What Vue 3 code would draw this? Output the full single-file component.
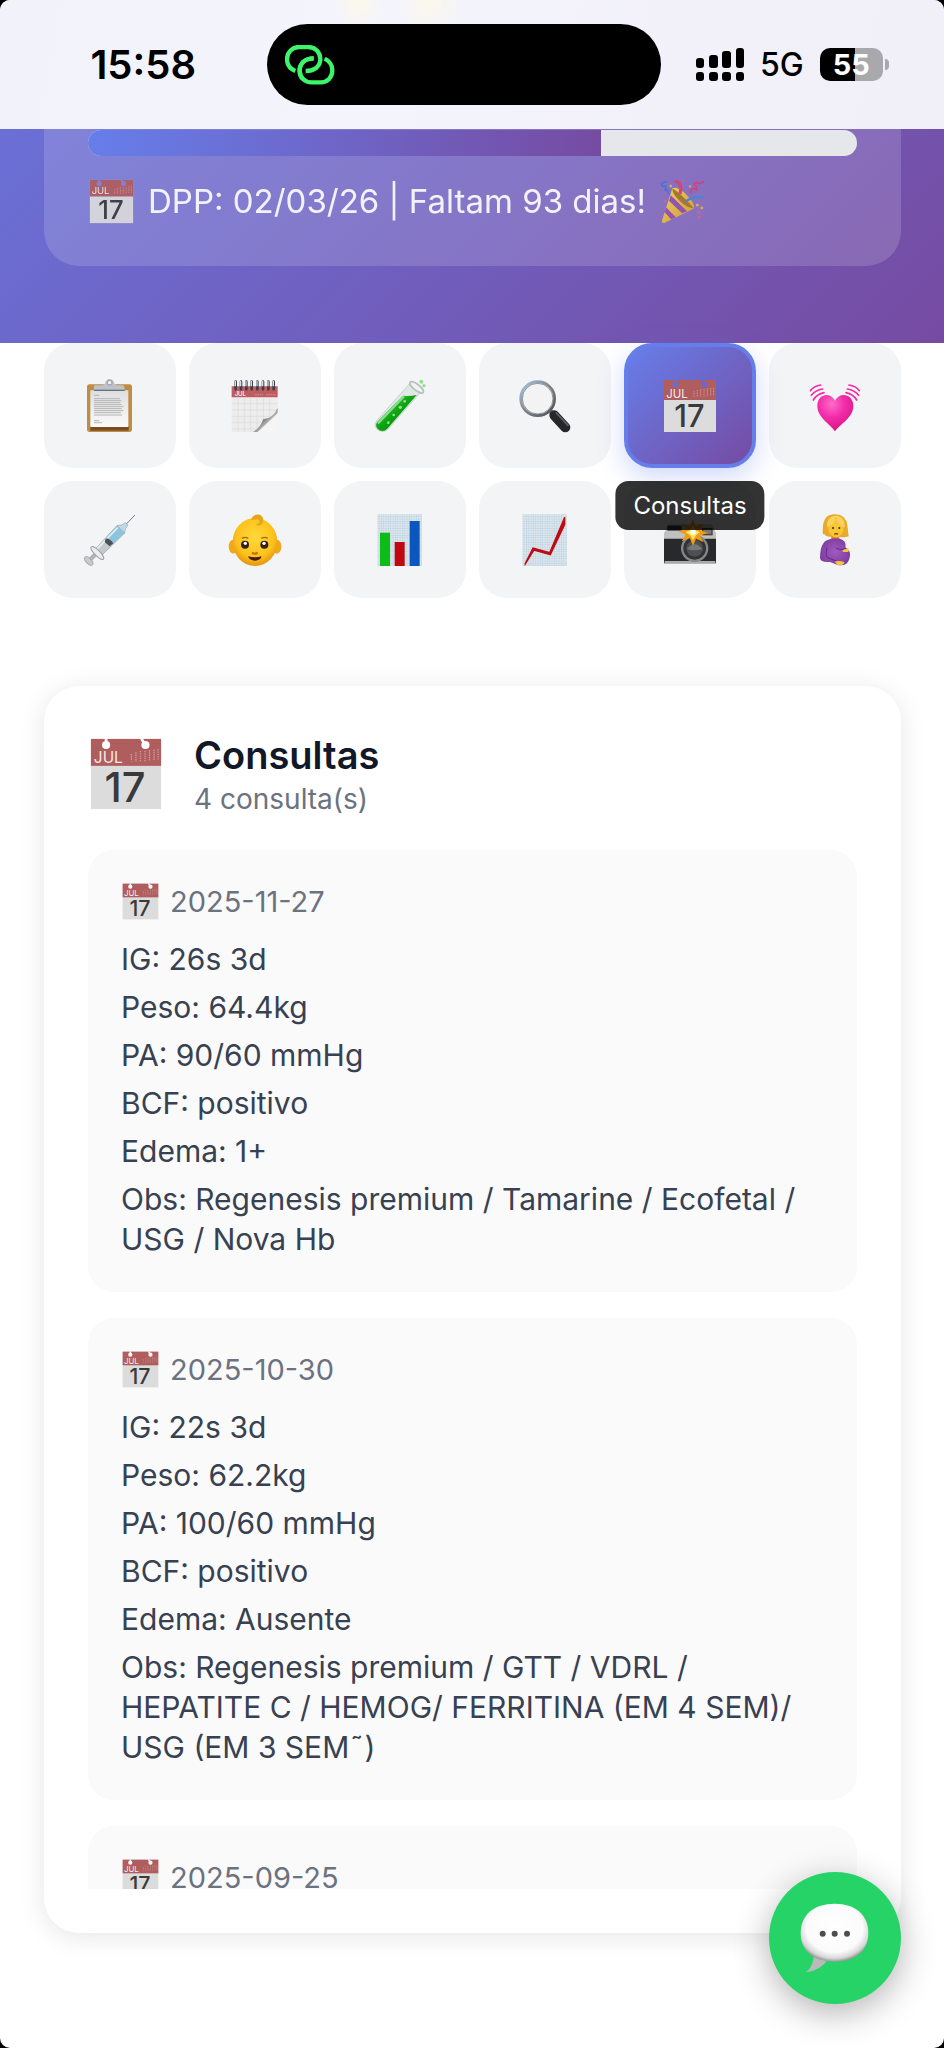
<script setup>
import { h, ref } from 'vue'

const active = ref('Consultas')

// Lettering printed on some of the icons
const lettering = {
  calendar: [
    { value: 'JUL', x: 7, y: 53, size: 34, weight: 400, fill: '#f6eaea', anchor: 'start' },
    { value: '17', x: 76, y: 141, size: 92, weight: 500, fill: '#3a3a3a', anchor: 'middle' },
  ],
  spiral: [{ value: 'JUL', x: 17, y: 49, size: 18, weight: 500, fill: '#fff', anchor: 'start' }],
}

const Emoji = (props) =>
  h('svg', { viewBox: '-6 -6 168 168', 'aria-hidden': 'true' }, [
    h('use', { href: '#' + props.name, x: -6, y: -6, width: 168, height: 168 }),
    ...(lettering[props.name] || []).map((t) =>
      h(
        'text',
        {
          x: t.x,
          y: t.y,
          'font-family': 'Inter, sans-serif',
          'font-size': t.size,
          'font-weight': t.weight,
          'text-anchor': t.anchor,
          fill: t.fill,
        },
        t.value
      )
    ),
  ])
Emoji.props = ['name']

const tabs = [
  { label: 'Resumo', icon: 'clipboard' },
  { label: 'Agenda', icon: 'spiral' },
  { label: 'Exames', icon: 'tube' },
  { label: 'Ultrassons', icon: 'lens' },
  { label: 'Consultas', icon: 'calendar' },
  { label: 'Batimentos', icon: 'heart' },
  { label: 'Vacinas', icon: 'syringe' },
  { label: 'Bebê', icon: 'baby' },
  { label: 'Dados', icon: 'bars' },
  { label: 'Curvas', icon: 'chart' },
  { label: 'Fotos', icon: 'camera' },
  { label: 'Gestante', icon: 'pregnant' },
]

const visits = [
  {
    date: '2025-11-27',
    lines: [
      'IG: 26s 3d',
      'Peso: 64.4kg',
      'PA: 90/60 mmHg',
      'BCF: positivo',
      'Edema: 1+',
      'Obs: Regenesis premium / Tamarine / Ecofetal / USG / Nova Hb',
    ],
  },
  {
    date: '2025-10-30',
    lines: [
      'IG: 22s 3d',
      'Peso: 62.2kg',
      'PA: 100/60 mmHg',
      'BCF: positivo',
      'Edema: Ausente',
      'Obs: Regenesis premium / GTT / VDRL / HEPATITE C / HEMOG/ FERRITINA (EM 4 SEM)/ USG (EM 3 SEM˜)',
    ],
  },
  { date: '2025-09-25', lines: [] },
]
</script>

<template>
  <div class="page">
    <svg class="sprite" width="0" height="0" aria-hidden="true">
      <defs>
        <mask id="holes">
          <rect width="156" height="156" fill="#fff" />
          <circle cx="34" cy="14" r="9" fill="#000" />
          <circle cx="121" cy="14" r="9" fill="#000" />
          <path d="M34 14V0M121 14L112 0" stroke="#000" stroke-width="6" />
        </mask>
        <linearGradient id="paper" x1="0" y1="0" x2="0" y2="1">
          <stop offset="0" stop-color="#dedee0" /><stop offset="1" stop-color="#fbfbfb" />
        </linearGradient>
        <linearGradient id="curl" x1="0" y1="0" x2="1" y2="1">
          <stop offset="0" stop-color="#ddd" /><stop offset=".35" stop-color="#555" /><stop offset=".7" stop-color="#ddd" /><stop offset="1" stop-color="#fff" />
        </linearGradient>
        <linearGradient id="green" x1="0" y1="0" x2="1" y2="1">
          <stop offset="0" stop-color="#55d65a" /><stop offset=".5" stop-color="#0ca30f" /><stop offset="1" stop-color="#087d0d" />
        </linearGradient>
        <linearGradient id="rim" x1="0" y1="0" x2="1" y2="1">
          <stop offset="0" stop-color="#9cc8f0" /><stop offset=".4" stop-color="#8b8f96" /><stop offset="1" stop-color="#4a4c50" />
        </linearGradient>
        <radialGradient id="pink" cx=".4" cy=".25" r=".8">
          <stop offset="0" stop-color="#ff6cc8" /><stop offset=".45" stop-color="#f32dab" /><stop offset="1" stop-color="#d4127f" />
        </radialGradient>
        <radialGradient id="skin" cx=".5" cy=".4" r=".6">
          <stop offset="0" stop-color="#ffd93b" /><stop offset=".7" stop-color="#fcc21b" /><stop offset="1" stop-color="#e39412" />
        </radialGradient>
        <linearGradient id="cone" x1="0" y1="0" x2="1" y2="1">
          <stop offset="0" stop-color="#f8e060" /><stop offset="1" stop-color="#d99a22" />
        </linearGradient>
        <radialGradient id="violet" cx=".5" cy=".5" r=".6">
          <stop offset="0" stop-color="#a05ac0" /><stop offset="1" stop-color="#7c3a9c" />
        </radialGradient>
        <radialGradient id="bubble" cx=".5" cy=".42" r=".58">
          <stop offset="0" stop-color="#fff" /><stop offset=".72" stop-color="#fbfbfb" /><stop offset=".9" stop-color="#d8d8d8" /><stop offset="1" stop-color="#999" />
        </radialGradient>
        <pattern id="gridlines" width="7" height="7" patternUnits="userSpaceOnUse">
          <rect width="7" height="7" fill="#dbe6ee" /><path d="M0 0H7M0 0V7" stroke="#b3c8d8" stroke-width="2" />
        </pattern>
      </defs>

      <symbol id="calendar" viewBox="-6 -6 168 168">
        <g mask="url(#holes)">
          <rect width="156" height="156" fill="#dcdcdc" />
          <rect width="156" height="60" fill="#b05d5e" />
        </g>
        <path d="M90 34V51M100 30V51M110 27V51M120 27V51M130 25V48M140 24V47M149 23V46" stroke="#d09a9a" stroke-width="3" stroke-dasharray="3 2" />
      </symbol>

      <symbol id="clipboard" viewBox="-6 -6 168 168">
        <rect x="9" y="13" width="135" height="143" rx="8" fill="#bf8c43" />
        <rect x="19" y="138" width="115" height="14" fill="#7a4d22" />
        <path d="M19 31H133V141H19Z" fill="url(#paper)" />
        <path d="M31 16H53Q60 16 64 9A13 12 0 0 1 90 9Q94 16 101 16H116Q122 16 122 31H30Q29 18 31 16Z" fill="#bcc3ca" />
        <path d="M30 31H122" stroke="#6c7278" stroke-width="4" />
        <circle cx="77" cy="8" r="7" fill="#f3f4f6" stroke="#9aabb9" stroke-width="4" />
        <path d="M30 46H46M30 56H108M30 62H112M30 68H109M30 74H113M30 80H118M30 86H113M30 92H118M30 98H110M30 105H114M30 122H46M30 128H54" stroke="#b4b4b4" stroke-width="3" />
      </symbol>

      <symbol id="spiral" viewBox="-6 -6 168 168">
        <path d="M8 19H146V98L88 156H8Z" fill="#ededee" />
        <path d="M8 19H146V52H8Z" fill="#bf5c60" />
        <path d="M27 52V156M46 52V156M65 52V156M84 52V156M103 52V140M122 52V120M8 71H146M8 90H146M8 109H130M8 128H110M8 147H94" stroke="#d9d9db" stroke-width="2" />
        <path d="M72 156Q98 138 104 120Q133 118 146 94V156Z" fill="#f5f5f5" />
        <path d="M72 156Q95 142 103 117Q130 118 146 84V100Q119 126 86 156Z" fill="url(#curl)" />
        <path d="M78 44H102M111 44H141" stroke="#cb8588" stroke-width="4" stroke-dasharray="5 2" />
        <path d="M20 28V5M36 28V5M52 28V5M68 28V5M85 28V5M102 28V5M118 28V5M134 28V5" stroke="#384148" stroke-width="8" stroke-linecap="round" />
        <path d="M19 17V4M35 17V4M51 17V4M67 17V4M84 17V4M101 17V4M117 17V4M133 17V4" stroke="#d7dfe5" stroke-width="4" stroke-linecap="round" />
      </symbol>

      <symbol id="tube" viewBox="-6 -6 168 168">
        <path d="M107 11L142 34L43 146Q30 160 14 151Q-4 139 9 121Z" fill="#dfe8e3" stroke="#b4c2bb" stroke-width="2" />
        <path d="M87 47Q104 50 128 45L40 146Q29 157 15 150Q0 139 10 125Z" fill="url(#green)" />
        <path d="M14 128L88 51" stroke="#a3e9a6" stroke-width="7" stroke-linecap="round" opacity=".8" />
        <ellipse cx="128" cy="22" rx="25" ry="9" transform="rotate(38 128 22)" fill="#eef2f1" stroke="#b7bebd" stroke-width="5" />
        <g fill="#8ee493"><circle cx="79" cy="82" r="5" /><circle cx="59" cy="105" r="4" /><circle cx="92" cy="64" r="4" /><circle cx="43" cy="128" r="4" /><circle cx="142" cy="5" r="6" /><circle cx="150" cy="17" r="5" /></g>
      </symbol>

      <symbol id="lens" viewBox="-6 -6 168 168">
        <path d="M88 88L100 100" stroke="#777" stroke-width="13" />
        <path d="M106 106L139 142" stroke="#25272b" stroke-width="30" stroke-linecap="round" />
        <path d="M112 99L147 136" stroke="#5e636b" stroke-width="5" stroke-linecap="round" />
        <circle cx="56" cy="56" r="51" fill="#f3f3f4" stroke="url(#rim)" stroke-width="8" />
        <circle cx="56" cy="56" r="46" fill="none" stroke="#5e6064" stroke-width="2" />
      </symbol>

      <symbol id="heart" viewBox="-6 -6 168 168">
        <path d="M78 154C63 132 25 112 25 78C25 42 64 34 78 62C92 34 133 42 133 78C133 112 94 132 78 154Z" fill="url(#pink)" />
        <g fill="none" stroke="#f62aa9" stroke-width="5" stroke-linecap="round">
          <path d="M13 60Q24 42 45 38M7 46Q20 30 41 27M4 32Q15 18 35 15" />
          <path d="M143 60Q132 42 111 38M149 46Q136 30 115 27M151 32Q140 18 120 15" />
        </g>
      </symbol>

      <symbol id="syringe" viewBox="-6 -6 168 168">
        <path d="M124 33L153 3" stroke="#737f89" stroke-width="3" />
        <path d="M18 137L44 111" stroke="#b0b4b8" stroke-width="13" />
        <path d="M31 108L99 35L122 57L53 124Z" fill="#c5c9ce" stroke="#8f969d" stroke-width="2" />
        <path d="M69 68L100 36L121 57L89 88Z" fill="#8cc4df" />
        <path d="M36 108L101 41" stroke="#fff" stroke-width="6" opacity=".65" />
        <path d="M65 74Q77 72 88 88L77 97L62 84Z" fill="#48525a" />
        <path d="M99 35Q113 35 125 26L132 33Q121 45 122 57Z" fill="#bfd9e6" stroke="#91a6b3" stroke-width="2" />
        <ellipse cx="40" cy="117" rx="26" ry="8" transform="rotate(45 40 117)" fill="#eceef0" stroke="#9ba1a7" stroke-width="3" />
        <ellipse cx="14" cy="141" rx="16" ry="8" transform="rotate(45 14 141)" fill="#c8cbcf" stroke="#a5abb0" stroke-width="3" />
      </symbol>

      <symbol id="baby" viewBox="-6 -6 168 168">
        <ellipse cx="12" cy="98" rx="13" ry="21" fill="#f0a81b" />
        <ellipse cx="144" cy="98" rx="13" ry="21" fill="#f0a81b" />
        <ellipse cx="78" cy="84" rx="67" ry="72" fill="url(#skin)" />
        <path d="M67 18C68 -2 101 -6 103 17C104 33 88 39 79 30C91 32 96 22 89 17C82 13 78 18 67 18Z" fill="#e9a51a" />
        <path d="M39 73Q48 67 58 73M97 73Q107 67 116 73" stroke="#a36613" stroke-width="4" fill="none" />
        <circle cx="48" cy="92" r="12" fill="#352017" /><circle cx="106" cy="92" r="12" fill="#352017" />
        <circle cx="49" cy="88" r="5" fill="#fff" /><circle cx="105" cy="88" r="5" fill="#fff" />
        <path d="M69 116Q77 122 86 116" stroke="#c06a13" stroke-width="6" fill="none" />
        <path d="M57 127Q78 133 98 127Q94 140 78 140Q62 140 57 127Z" fill="#491d0c" />
      </symbol>

      <symbol id="bars" viewBox="-6 -6 168 168">
        <rect x="10" y="1" width="134" height="155" fill="url(#gridlines)" />
        <rect x="18" y="56" width="30" height="100" fill="#0bbd16" />
        <rect x="62" y="84" width="30" height="72" fill="#c00810" />
        <rect x="107" y="21" width="30" height="135" fill="#0b57be" />
      </symbol>

      <symbol id="chart" viewBox="-6 -6 168 168">
        <rect x="10" y="1" width="134" height="155" fill="url(#gridlines)" />
        <path d="M19 148L42 102L92 116L137 10V32L94 122L45 108L19 150Z" fill="#be0b12" stroke="#be0b12" stroke-width="4" />
      </symbol>

      <symbol id="camera" viewBox="-6 -6 168 168">
        <path d="M14 31H143L156 58V148H0V58Z" fill="#bfc0c1" />
        <path d="M0 74H156V148H0Z" fill="#28292b" />
        <path d="M2 144H154" stroke="#aaa" stroke-width="6" />
        <rect x="10" y="35" width="43" height="15" fill="#3d3d3f" />
        <rect x="116" y="44" width="28" height="18" fill="#777" stroke="#4e3d31" stroke-width="4" />
        <circle cx="92" cy="103" r="41" fill="#85878a" />
        <circle cx="92" cy="103" r="34" fill="#303335" />
        <circle cx="92" cy="103" r="25" fill="#4d5053" />
        <path d="M69 105Q92 77 115 105Q90 113 69 105Z" fill="#777" />
        <path d="M87 15L95 39L119 27L108 48L131 57L107 65L119 85L96 74L87 95L77 72L53 82L65 62L43 52L67 46L55 27L78 38Z" fill="#f39a13" />
        <path d="M87 34L95 49L108 55L96 64L87 78L78 64L64 55L79 48Z" fill="#ffe45c" />
        <circle cx="87" cy="55" r="8" fill="#fff" />
      </symbol>

      <symbol id="pregnant" viewBox="-6 -6 168 168">
        <path d="M45 60Q39 66 42 35Q46 0 79 1Q111 2 115 34L119 67Q105 72 92 68H64Q52 70 45 60Z" fill="#e8aa28" />
        <path d="M67 56H91V86H67Z" fill="#d99119" />
        <ellipse cx="81" cy="42" rx="23" ry="28" fill="#f8c535" />
        <path d="M54 39Q75 35 80 10Q88 34 107 40Q108 4 79 5Q52 8 54 39Z" fill="#f9d35d" />
        <circle cx="72" cy="42" r="3" fill="#3c2415" /><circle cx="91" cy="42" r="3" fill="#3c2415" />
        <path d="M76 61Q82 57 87 61" stroke="#8a2a1f" stroke-width="4" fill="none" />
        <path d="M58 77Q80 69 100 77Q113 85 109 100Q130 112 121 135Q114 158 86 153L63 144Q31 146 33 130Q34 83 58 77Z" fill="url(#violet)" />
        <path d="M54 101Q48 123 55 130Q65 136 82 141M81 103Q102 110 111 102" stroke="#62287f" stroke-width="3" fill="none" />
        <path d="M77 143Q90 138 106 144Q104 156 86 153Z" fill="#f8c535" />
        <path d="M101 108L117 103Q123 109 117 114L101 114Z" fill="#f8c535" />
      </symbol>

      <symbol id="party" viewBox="-6 -6 168 168">
        <path d="M42 31Q60 22 92 54Q124 85 119 103L15 154Q2 158 5 145Z" fill="url(#cone)" />
        <path d="M30 76L77 120L94 113L36 56ZM14 116L38 142L54 134L20 99Z" fill="#9650ae" />
        <path d="M42 31Q75 52 119 103Q88 99 65 73Q40 49 42 31Z" fill="#a97822" />
        <path d="M51 5Q80 14 69 51" fill="none" stroke="#dc416f" stroke-width="11" />
        <path d="M23 8Q-5 9 7 24Q28 21 14 39Q28 32 28 51" fill="none" stroke="#3e73d7" stroke-width="6" />
        <path d="M106 48Q115 24 124 34Q133 44 128 24Q111 12 128 10Q141 21 154 4" fill="none" stroke="#d93c78" stroke-width="6" />
        <path d="M90 77Q120 57 154 64" fill="none" stroke="#4a83dc" stroke-width="9" />
        <g fill="#e5b93c"><circle cx="36" cy="23" r="5" /><circle cx="105" cy="24" r="4" /><circle cx="147" cy="101" r="5" /><circle cx="131" cy="91" r="5" /></g>
        <g fill="#d9628b"><circle cx="16" cy="77" r="5" /><circle cx="138" cy="133" r="5" /><circle cx="136" cy="116" r="5" /><circle cx="80" cy="3" r="4" /></g>
      </symbol>
    </svg>

    <header class="status">
      <time class="clock">15:58</time>
      <div class="island">
        <svg class="link" viewBox="855 135 150 120" width="50" height="40" fill="none" stroke="#3df56b" stroke-width="13" aria-hidden="true">
          <path d="M941 175C915 175 899 190 899 212C899 232 914 247 935 247H962C983 247 997 232 997 211C997 196 990 184 974 176" />
          <path d="M886 213C868 206 861 194 861 178C861 156 877 141 897 141H925C946 141 961 157 961 178C961 200 942 213 917 213" stroke="#000" stroke-width="20" />
          <path d="M941 175C915 175 899 190 899 212C899 222 903 231 909 237" />
          <path d="M886 213C868 206 861 194 861 178C861 156 877 141 897 141H925C946 141 961 157 961 178C961 200 942 213 917 213" />
        </svg>
      </div>
      <div class="signals">
        <svg width="48" height="34" viewBox="0 0 48 34" aria-hidden="true">
          <rect x="0" y="10" width="8" height="10" rx="3" /><rect x="13" y="7" width="9" height="13" rx="3" />
          <rect x="26" y="3" width="9" height="17" rx="3" /><rect x="40" y="0" width="8" height="20" rx="3" />
          <rect x="0" y="24" width="8" height="9" rx="3" /><rect x="13" y="24" width="9" height="9" rx="3" />
          <rect x="26" y="24" width="9" height="9" rx="3" /><rect x="40" y="24" width="8" height="9" rx="3" />
        </svg>
        <span class="network">5G</span>
        <span class="battery"><span class="charge">55</span></span>
      </div>
    </header>

    <section class="hero">
      <div class="summary">
        <div class="track" role="progressbar" aria-label="Progresso" aria-valuenow="67">
          <div class="fill"></div>
        </div>
        <p class="due">
          <Emoji class="emoji-md" name="calendar" />
          <span>DPP: 02/03/26 | Faltam 93 dias!</span>
          <Emoji class="emoji-md" name="party" />
        </p>
      </div>
    </section>

    <nav class="tabs">
      <button
        v-for="tab in tabs"
        :key="tab.label"
        type="button"
        class="tab"
        :class="{ active: active === tab.label }"
        :aria-label="tab.label"
        @click="active = tab.label"
      >
        <Emoji class="emoji-tab" :name="tab.icon" />
        <span v-if="active === tab.label" class="tip">{{ tab.label }}</span>
      </button>
    </nav>

    <main class="card">
      <div class="card-head">
        <Emoji class="emoji-lg" name="calendar" />
        <div>
          <h1>Consultas</h1>
          <p class="count">4 consulta(s)</p>
        </div>
      </div>
      <div class="list">
        <article v-for="visit in visits" :key="visit.date" class="visit">
          <div class="date">
            <Emoji class="emoji-sm" name="calendar" />
            <time>{{ visit.date }}</time>
          </div>
          <div v-if="visit.lines.length" class="lines">
            <p v-for="line in visit.lines" :key="line">{{ line }}</p>
          </div>
        </article>
      </div>
    </main>

    <button type="button" class="chat" aria-label="Conversar">
      <svg width="70" height="70" viewBox="0 0 210 210" aria-hidden="true">
        <path d="M42 148Q42 190 18 208Q62 203 85 168Z" fill="#b9bbba" />
        <path d="M104 2C166 2 205 35 205 90C205 145 164 176 104 176C42 176 2 145 2 90C2 35 42 2 104 2Z" fill="url(#bubble)" />
        <g fill="#4d4d4d"><circle cx="68" cy="92" r="9" /><circle cx="104" cy="92" r="9" /><circle cx="141" cy="92" r="9" /></g>
      </svg>
    </button>
  </div>
</template>

<style>
body {
  background: #000;
}
</style>

<style scoped>
.page {
  min-height: 100vh;
  box-sizing: border-box;
  padding-bottom: 44px;
  background: #fff;
  border-radius: 10px;
  overflow: hidden;
  font-family: Inter, "Liberation Sans", sans-serif;
}
.page p,
.page h1 {
  margin: 0;
}
.sprite {
  position: absolute;
}

.status {
  display: grid;
  grid-template-columns: 1fr 394px 1fr;
  align-items: center;
  height: 129px;
  padding-right: 16px;
  background:
    radial-gradient(circle at 358px 4px, #fbf8ea 0, transparent 26px),
    radial-gradient(circle at 428px 4px, #fbf8ea 0, transparent 32px),
    linear-gradient(100deg, #f2f2fb, #f4f4fc 40%, #f1eff8);
}
.clock {
  justify-self: end;
  padding-right: 71px;
  font-size: 40px;
  font-weight: 600;
  color: #000;
}
.island {
  display: flex;
  align-items: center;
  height: 81px;
  padding-left: 18px;
  border-radius: 41px;
  background: #000;
}
.signals {
  display: flex;
  align-items: center;
  gap: 16px;
  padding-left: 35px;
}
.network {
  font-size: 32px;
  font-weight: 500;
  color: #000;
}
.battery {
  display: flex;
  align-items: center;
}
.battery::after {
  content: "";
  width: 4px;
  height: 11px;
  margin-left: 2px;
  border-radius: 0 6px 6px 0;
  background: #a9a9ad;
}
.charge {
  width: 63px;
  border-radius: 10px;
  background: linear-gradient(90deg, #000 55%, #a9a9ad 55%);
  color: #fff;
  font-size: 29px;
  font-weight: 700;
  line-height: 33px;
  text-align: center;
}

.hero {
  position: relative;
  z-index: 1;
  padding: 0 43px 77px 44px;
  background: linear-gradient(135deg, #667eea -39%, #764ba2 100%);
}
.summary {
  padding: 1px 44px 40px;
  border-radius: 0 0 35px 35px;
  background: rgba(255, 255, 255, 0.15);
}
.track {
  height: 26px;
  border-radius: 13px;
  background: #e5e7eb;
  overflow: hidden;
}
.fill {
  width: 66.7%;
  height: 100%;
  background: linear-gradient(90deg, #667eea, #764ba2);
}
.due {
  display: flex;
  align-items: center;
  gap: 13px;
  padding-top: 20px;
  font-size: 33px;
  line-height: 50px;
  color: #fff;
  opacity: 0.9;
}
.emoji-md {
  width: 47px;
  height: 47px;
}

.tabs {
  display: grid;
  grid-template-columns: repeat(6, 1fr);
  gap: 13px;
  padding: 0 43px 0 44px;
}
.tab {
  position: relative;
  box-sizing: content-box;
  display: flex;
  align-items: center;
  justify-content: center;
  min-height: 117px;
  padding: 0;
  border: 0;
  border-radius: 28px;
  background: #f3f4f6;
  cursor: pointer;
}
.tab.active {
  z-index: 1;
  border: 4px solid #667eea;
  background: linear-gradient(135deg, #667eea, #764ba2);
  box-shadow: 0 9px 26px rgba(102, 126, 234, 0.3);
}
.emoji-tab {
  width: 56px;
  height: 56px;
}
.tip {
  position: absolute;
  top: calc(100% + 17px);
  left: 50%;
  transform: translateX(-50%);
  padding: 0 18px;
  border-radius: 13px;
  background: rgba(0, 0, 0, 0.8);
  color: #fff;
  font: 400 24px/49px Inter, "Liberation Sans", sans-serif;
  white-space: nowrap;
}

.card {
  margin: 88px 43px 0 44px;
  padding: 44px;
  border-radius: 35px;
  background: #fff;
  box-shadow: 0 4px 26px rgba(0, 0, 0, 0.1);
}
.card-head {
  display: flex;
  align-items: center;
  gap: 30px;
  margin-bottom: 32px;
}
.emoji-lg {
  width: 76px;
  height: 76px;
}
h1 {
  font-size: 38px;
  font-weight: 600;
  line-height: 50px;
  color: #111827;
}
.count {
  font-size: 28px;
  line-height: 38px;
  color: #6b7280;
}
.list {
  display: flex;
  flex-direction: column;
  gap: 26px;
  max-height: 1039px;
  overflow: hidden auto;
  scrollbar-width: none;
}
.visit {
  flex: none;
  padding: 33px;
  border-radius: 26px;
  background: #fafafa;
}
.date {
  display: flex;
  align-items: center;
  gap: 10px;
  height: 36px;
  font-size: 29px;
  color: #6b7280;
}
.emoji-sm {
  width: 39px;
  height: 39px;
}
.lines {
  display: flex;
  flex-direction: column;
  gap: 8px;
  margin-top: 20px;
  font-size: 30px;
  line-height: 40px;
  color: #374151;
}

.chat {
  position: fixed;
  right: 43px;
  bottom: 44px;
  z-index: 2;
  display: flex;
  align-items: center;
  justify-content: center;
  width: 132px;
  height: 132px;
  padding: 0;
  border: 0;
  border-radius: 50%;
  background: #25d366;
  box-shadow: 0 9px 35px rgba(0, 0, 0, 0.3);
  cursor: pointer;
}
</style>
